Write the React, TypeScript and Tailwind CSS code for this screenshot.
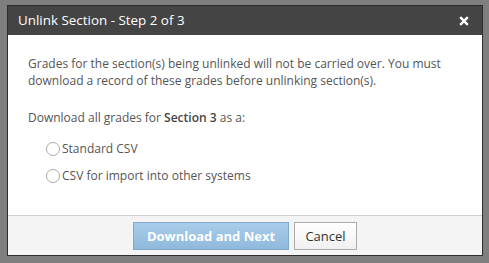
import React from "react";

export default function App() {
  return (
    <div
      className="w-[489px] h-[263px] bg-[#7f7f7f] relative overflow-hidden pt-[5px] pl-[7px]"
      style={{ fontFamily: '"Open Sans", "Noto Sans", sans-serif' }}
    >
      <div className="w-[476px] h-[251px] border border-[#2e2e2e] flex flex-col bg-white">
        <div className="h-[29px] bg-[#444444] flex items-center justify-between pl-[10px] pr-[13px] shrink-0">
          <span className="text-white text-[13.4px] leading-none">Unlink Section - Step 2 of 3</span>
          <svg width="10" height="10" viewBox="0 0 10 10">
            <path d="M1.2 1.2 L8.8 8.8 M8.8 1.2 L1.2 8.8" stroke="white" strokeWidth="2.4" strokeLinecap="butt" />
          </svg>
        </div>
        <div className="flex-1 pl-[20px] pr-[12px] pt-[20px] text-[12px] leading-[17px] text-[#555555]">
          <p>
            Grades for the section(s) being unlinked will not be carried over. You must download a record of these grades before unlinking section(s).
          </p>
          <p className="mt-[20px]">
            Download all grades for <span className="font-semibold text-[#444]">Section 3</span> as a:
          </p>
          <div className="mt-[14px] pl-[18px] flex flex-col gap-[10px]">
            <label className="flex items-center">
              <span className="w-[14px] h-[14px] rounded-full border border-[#aaaaaa] bg-white mr-[2px]" />
              <span>Standard CSV</span>
            </label>
            <label className="flex items-center">
              <span className="w-[14px] h-[14px] rounded-full border border-[#aaaaaa] bg-white mr-[2px]" />
              <span>CSV for import into other systems</span>
            </label>
          </div>
        </div>
        <div className="h-[40px] bg-[#f4f4f4] border-t border-[#cfcfcf] flex justify-center items-start pt-[6px] gap-[5px] shrink-0">
          <button className="h-[28px] w-[156px] bg-gradient-to-b from-[#a9cdea] to-[#8fb9dc] border border-[#82a9c9] text-white font-bold text-[13px] leading-none">
            Download and Next
          </button>
          <button className="h-[28px] w-[63px] bg-gradient-to-b from-[#ffffff] to-[#f0f0f0] border border-[#aaaaaa] text-[#333] text-[13px] leading-none">
            Cancel
          </button>
        </div>
      </div>
    </div>
  );
}
